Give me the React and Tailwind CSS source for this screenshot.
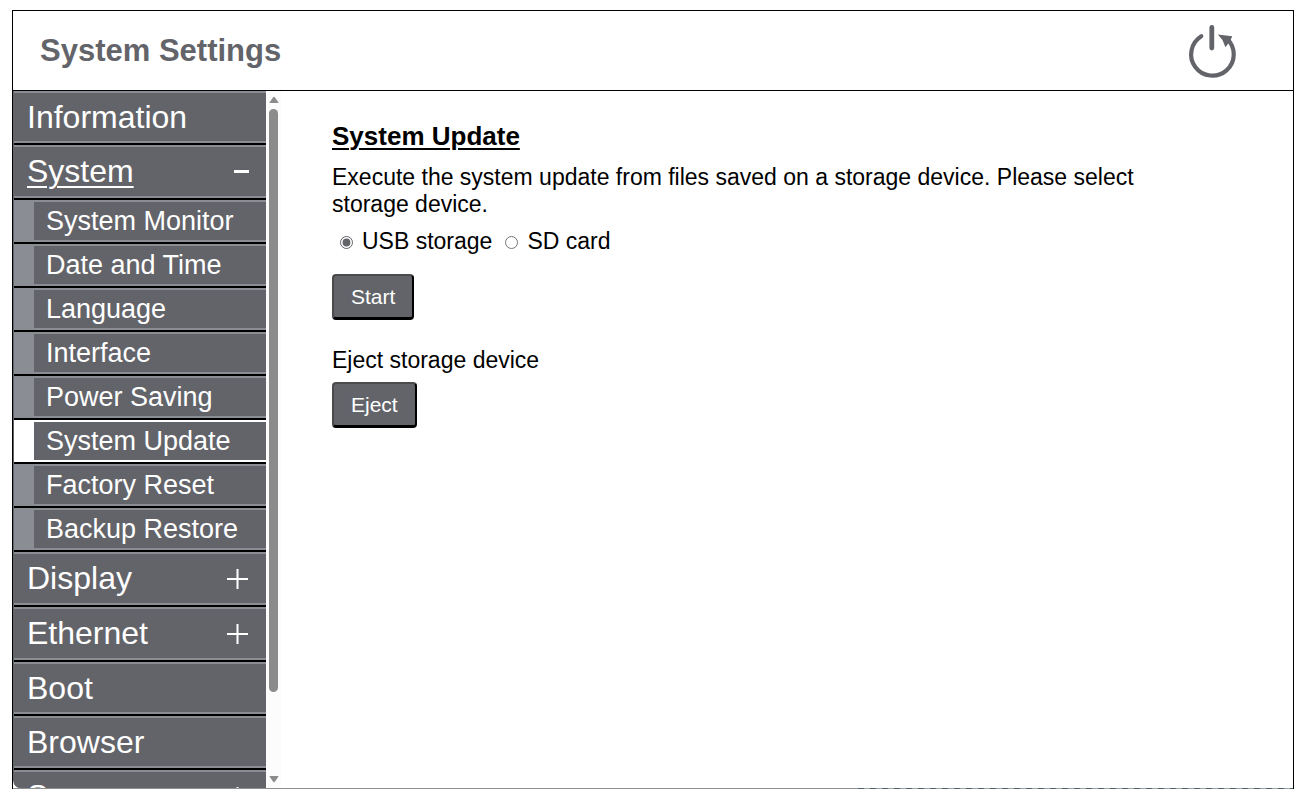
import { useState } from "react";

const menu = [
  { label: "Information" },
  {
    label: "System",
    children: [
      "System Monitor",
      "Date and Time",
      "Language",
      "Interface",
      "Power Saving",
      "System Update",
      "Factory Reset",
      "Backup Restore",
    ],
  },
  { label: "Display", children: [] },
  { label: "Ethernet", children: [] },
  { label: "Boot" },
  { label: "Browser" },
  { label: "Screen", children: [] },
];

function PowerIcon() {
  return (
    <svg viewBox="0 0 54 58" className="w-[54px] h-[58px]" fill="none" stroke="#63646a">
      <path d="M16.3 14.2A21.3 21.3 0 1 0 42.2 17" strokeWidth="4.2" strokeLinecap="round" />
      <path d="M26.8 5.5V26" strokeWidth="4.8" strokeLinecap="round" />
      <path d="M32.8 12.6L47.2 14.2L45 19.5L40.4 25.2L37.5 18Z" fill="#63646a" stroke="none" />
    </svg>
  );
}

function PlusMinus({ open }) {
  return (
    <svg viewBox="0 0 22 22" className="w-[22px] h-[22px]" stroke="#fff" fill="none">
      {open ? <path d="M7 10.5H23" strokeWidth="3" /> : <path d="M0 11H21M10.5 1V21" strokeWidth="2" />}
    </svg>
  );
}

function SubItem({ label, active, onSelect }) {
  return (
    <li>
      <button
        onClick={onSelect}
        className={
          active
            ? "w-full h-[44px] flex items-center border-b-2 border-black bg-white py-[2px] pl-[20px]"
            : "w-full h-[44px] flex items-center border-b-2 border-black bg-[#8a8d94] py-[2px] pl-[20px]"
        }
      >
        <span className="flex-1 h-full flex items-center bg-[#63646a] pl-[12px] text-[27px] leading-[36px] whitespace-nowrap">
          {label}
        </span>
      </button>
    </li>
  );
}

function MenuItem({ item, open, page, onToggle, onSelect }) {
  return (
    <li>
      <button
        onClick={onToggle}
        className={
          item.children
            ? "w-full h-[55px] border-b-2 border-black bg-[#8a8d94] py-[2px]"
            : "w-full h-[54px] border-b-2 border-black bg-[#8a8d94] py-[2px]"
        }
      >
        <span className="h-full flex items-start justify-between bg-[#63646a] pl-[13px] pr-[17px] text-[32px] leading-[48px]">
          <span className={open ? "underline decoration-2 underline-offset-4" : ""}>{item.label}</span>
          {item.children && (
            <span className="self-center">
              <PlusMinus open={open} />
            </span>
          )}
        </span>
      </button>
      {open && (
        <ul>
          {item.children.map((c) => (
            <SubItem key={c} label={c} active={c === page} onSelect={() => onSelect(c)} />
          ))}
        </ul>
      )}
    </li>
  );
}

function ScrollBar() {
  return (
    <div className="w-[15px] shrink-0 flex flex-col items-center bg-[#fcfcfc] py-[5px]">
      <svg viewBox="0 0 10 8" className="w-[10px] h-[8px] mb-[5px]" fill="#8b8b8b">
        <path d="M4 1.5Q5 0 6 1.5L9.5 6.5Q9.5 7 9 7H1Q.5 7 .5 6.5Z" />
      </svg>
      <div className="w-full flex-1 flex justify-center">
        <div className="w-[9px] h-7/8 rounded-full bg-[#8b8b8b]" />
      </div>
      <svg viewBox="0 0 10 8" className="w-[10px] h-[8px]" fill="#8b8b8b">
        <path d="M4 6.5Q5 8 6 6.5L9.5 1.5Q9.5 1 9 1H1Q.5 1 .5 1.5Z" />
      </svg>
    </div>
  );
}

function ActionButton({ children }) {
  return (
    <button className="h-[46px] px-[17px] rounded-sm border-2 border-b-3 border-t-[#4b4b4b] border-l-[#4b4b4b] border-r-black border-b-black bg-[#63646a] text-white text-[21px] leading-[24px]">
      {children}
    </button>
  );
}

export default function App() {
  const [open, setOpen] = useState("System");
  const [page, setPage] = useState("System Update");
  const [device, setDevice] = useState("usb");

  return (
    <div className="h-screen bg-white pt-[10px] pb-[8px] px-[12px] font-['Liberation_Sans',Arial,sans-serif] text-black">
      <div className="h-full flex flex-col border border-b-0 border-black">
        {/* Header */}
        <header className="h-[80px] shrink-0 flex items-center justify-between border-b border-black pl-[27px] pr-[54px]">
          <h1 className="text-[31px] leading-[36px] font-bold text-[#63646a]">System Settings</h1>
          <button aria-label="Restart">
            <PowerIcon />
          </button>
        </header>

        <div className="flex-1 min-h-0 flex">
          {/* Sidebar */}
          <nav className="w-[253px] shrink-0 overflow-hidden rounded-bl-lg bg-[#63646a] pl-px text-white">
            <ul>
              {menu.map((item) => (
                <MenuItem
                  key={item.label}
                  item={item}
                  open={!!item.children && open === item.label}
                  page={page}
                  onToggle={() => setOpen(open === item.label ? "" : item.label)}
                  onSelect={setPage}
                />
              ))}
            </ul>
          </nav>
          <ScrollBar />

          {/* Content */}
          <main className="flex-1 pt-[30px] pl-[51px]">
            <h2 className="text-[26px] leading-[30px] font-bold underline decoration-2 underline-offset-3">{page}</h2>
            <p className="max-w-[820px] mt-[13px] text-[23px] leading-[27px]">
              Execute the system update from files saved on a storage device. Please select storage device.
            </p>
            <div className="flex mt-[10px] text-[23px] leading-[27px]">
              <label className="flex items-center">
                <input
                  type="radio"
                  name="device"
                  checked={device === "usb"}
                  onChange={() => setDevice("usb")}
                  className="w-[13px] h-[13px] mt-[2px] ml-[8px] mr-[9px] accent-[#63646a]"
                />
                USB storage
              </label>
              <label className="flex items-center">
                <input
                  type="radio"
                  name="device"
                  checked={device === "sd"}
                  onChange={() => setDevice("sd")}
                  className="w-[13px] h-[13px] mt-[2px] ml-[13px] mr-[9px] accent-[#63646a]"
                />
                SD card
              </label>
            </div>
            <div className="mt-[19px]">
              <ActionButton>Start</ActionButton>
            </div>
            <p className="mt-[27px] mb-[8px] text-[23px] leading-[27px]">Eject storage device</p>
            <ActionButton>Eject</ActionButton>
          </main>
        </div>

        {/* Bottom edge, solid then dashed */}
        <div className="h-px shrink-0 flex">
          <div className="w-[66%] bg-[#8f8f8f]" />
          <div className="flex-1 bg-[repeating-linear-gradient(90deg,#51626a_0_6px,#9aa5a5_6px_12px)]" />
        </div>
      </div>
    </div>
  );
}
